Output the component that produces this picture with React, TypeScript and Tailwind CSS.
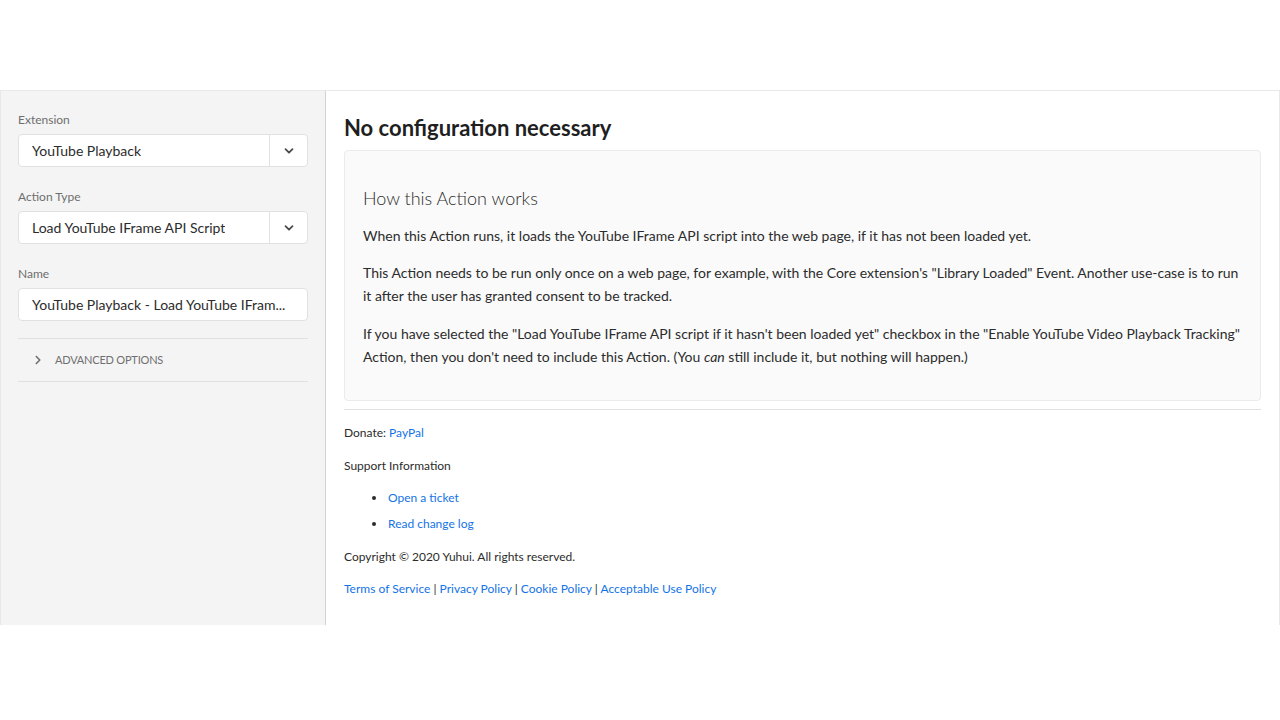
import React from 'react';

const font = {fontFamily: 'Lato, "Liberation Sans", sans-serif'};

function ChevronDown() {
    return (
        <svg width="10" height="10" viewBox="0 0 10 10" fill="none">
            <path d="M1.5 3.2 L5 6.7 L8.5 3.2" stroke="#4b4b4b" strokeWidth="1.8" strokeLinecap="round" strokeLinejoin="round" />
        </svg>
    );
}

function ChevronRight() {
    return (
        <svg width="10" height="10" viewBox="0 0 10 10" fill="none">
            <path d="M3.3 1.5 L6.8 5 L3.3 8.5" stroke="#6e6e6e" strokeWidth="1.6" strokeLinecap="round" strokeLinejoin="round" />
        </svg>
    );
}

function Field(props: {label: string; value: string; dropdown?: boolean}) {
    return (
        <div className="flex flex-col">
            <label className="text-[12px] leading-[18px] text-[#6e6e6e] mb-[5px]">{props.label}</label>
            <div className="flex h-[33px] bg-white border border-[#e1e1e1] rounded-[4px]">
                <div className="flex-1 flex items-center pl-[13px] pr-2 text-[14px] text-[#2c2c2c] truncate">
                    <span className="truncate">{props.value}</span>
                </div>
                {props.dropdown && (
                    <div className="w-[38px] border-l border-[#e1e1e1] flex items-center justify-center">
                        <ChevronDown />
                    </div>
                )}
            </div>
        </div>
    );
}

export default function App() {
    return (
        <div className="w-[1280px] h-[720px] bg-white pt-[90px]" style={font}>
            <div className="flex h-[535px] border-t border-l border-r border-[#e8e8e8]">
                {/* Panneau de gauche */}
                <div className="w-[325px] shrink-0 bg-[#f4f4f4] border-r border-[#d3d3d3] px-[17px] pt-[20px]">
                    <div className="flex flex-col gap-[21px]">
                        <Field label="Extension" value="YouTube Playback" dropdown />
                        <Field label="Action Type" value="Load YouTube IFrame API Script" dropdown />
                        <Field label="Name" value="YouTube Playback - Load YouTube IFram..." />
                    </div>
                    <div className="mt-[17px] border-t border-b border-[#e1e1e1] h-[44px] flex items-center pl-[15px] gap-[12px]">
                        <ChevronRight />
                        <span className="text-[11px] text-[#707070] tracking-[-0.2px]">ADVANCED OPTIONS</span>
                    </div>
                </div>

                {/* Contenu */}
                <div className="flex-1 pl-[18px] pr-[18px] pt-[22px]">
                    <h1 className="text-[22px] leading-[30px] font-bold text-[#1f1f1f]">No configuration necessary</h1>
                    <div className="mt-[7px] bg-[#fafafa] border border-[#ebebeb] rounded-[4px] px-[18px] pt-[35px] pb-[32px] text-[14px] leading-[23px] text-[#2c2c2c]">
                        <h3 className="text-[18px] leading-[24px] font-light text-[#2c2c2c] mb-[14px]">How this Action works</h3>
                        <p>When this Action runs, it loads the YouTube IFrame API script into the web page, if it has not been loaded yet.</p>
                        <p className="mt-[14px]">
                            This Action needs to be run only once on a web page, for example, with the Core extension's "Library Loaded" Event. Another use-case is to run it after the user has granted consent to be tracked.
                        </p>
                        <p className="mt-[15px]">
                            If you have selected the "Load YouTube IFrame API script if it hasn't been loaded yet" checkbox in the "Enable YouTube Video Playback Tracking" Action, then you don't need to include this Action. (You <em>can</em> still include it, but nothing will happen.)
                        </p>
                    </div>
                    <div className="mt-[8px] border-t border-[#e1e1e1] pt-[14px] text-[12px] leading-[18px] text-[#2c2c2c]">
                        <p>
                            Donate: <a className="text-[#1473e6]">PayPal</a>
                        </p>
                        <p className="mt-[15px]">Support Information</p>
                        <ul className="mt-[14px] pl-[43px] list-disc">
                            <li className="pl-[1px]"><a className="text-[#1473e6]">Open a ticket</a></li>
                            <li className="mt-[8px] pl-[1px]"><a className="text-[#1473e6]">Read change log</a></li>
                        </ul>
                        <p className="mt-[15px]">Copyright © 2020 Yuhui. All rights reserved.</p>
                        <p className="mt-[14px]">
                            <a className="text-[#1473e6]">Terms of Service</a> | <a className="text-[#1473e6]">Privacy Policy</a> | <a className="text-[#1473e6]">Cookie Policy</a> | <a className="text-[#1473e6]">Acceptable Use Policy</a>
                        </p>
                    </div>
                </div>
            </div>
        </div>
    );
}
